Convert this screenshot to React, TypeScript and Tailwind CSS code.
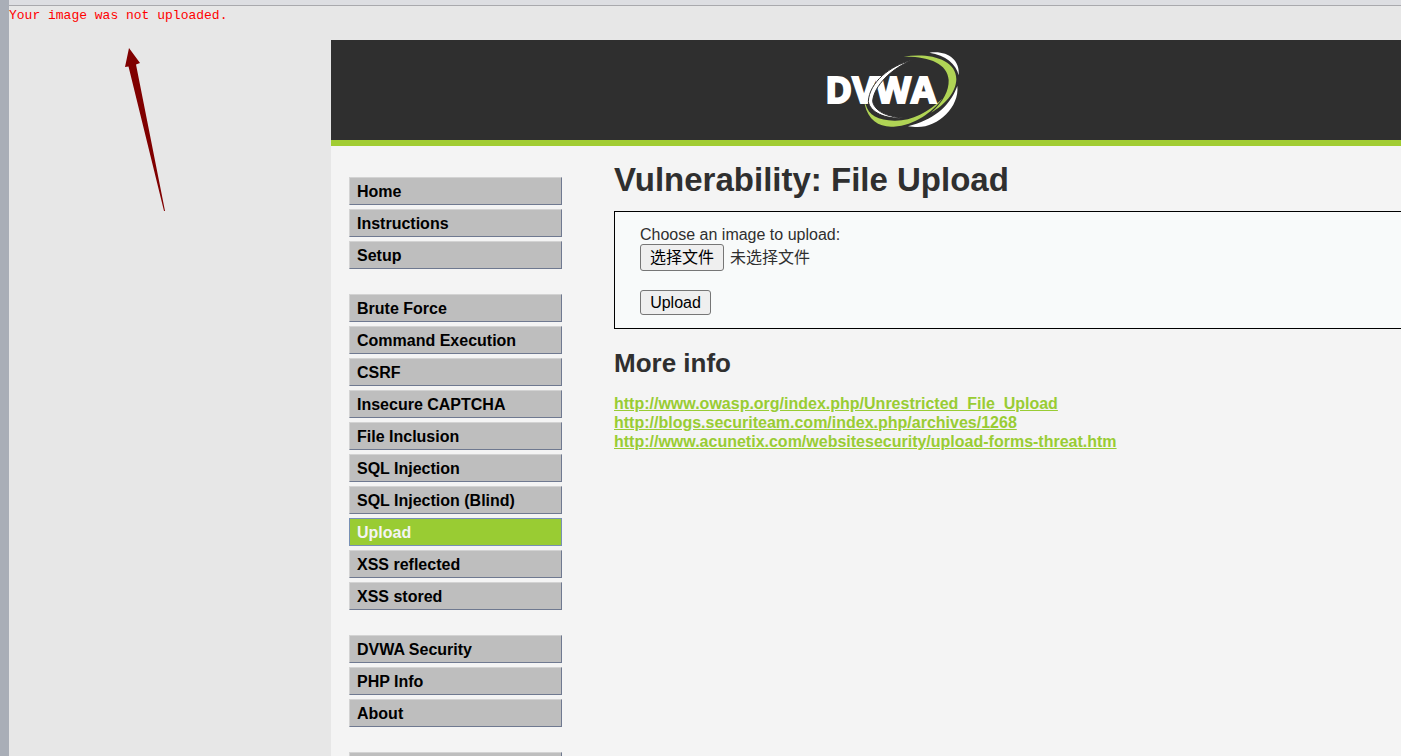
import React, { useRef } from "react";
import clsx from "clsx";

const menu = [
  ["Home", "Instructions", "Setup"],
  [
    "Brute Force",
    "Command Execution",
    "CSRF",
    "Insecure CAPTCHA",
    "File Inclusion",
    "SQL Injection",
    "SQL Injection (Blind)",
    "Upload",
    "XSS reflected",
    "XSS stored",
  ],
  ["DVWA Security", "PHP Info", "About"],
];

const links = [
  "http://www.owasp.org/index.php/Unrestricted_File_Upload",
  "http://blogs.securiteam.com/index.php/archives/1268",
  "http://www.acunetix.com/websitesecurity/upload-forms-threat.htm",
];

function Logo() {
  return (
    <svg
      viewBox="36 36 396 228"
      className="h-[76px] w-[132px] overflow-visible"
      role="img"
      aria-label="DVWA"
    >
      {/* lower sweep */}
      <path
        d="M149 193C160 243 195 263 236 260C300 256 352 216 382 176C340 216 290 243 238 242C190 242 160 226 152 193Z"
        fill="#b0d455"
      />
      <path d="M427 138C434 202 366 266 300 261L279 259C350 240 402 205 427 138Z" fill="#fff" />
      {/* upper sweep */}
      <path
        d="M266 50C340 38 424 56 424 118C423 158 388 196 348 218C386 184 402 152 401 120C398 70 340 48 266 50Z"
        fill="#b0d455"
      />
      <path d="M343 38C395 30 436 58 431 106C424 72 392 46 343 38Z" fill="#fff" />
      <text
        x="31"
        y="189"
        className="font-['Open_Sans',sans-serif] text-[109px] font-bold"
        fill="#fff"
        stroke="#fff"
        strokeWidth="6"
      >
        DVWA
      </text>
      <path
        d="M290 61C225 76 163 128 160 184C164 216 210 238 264 234C215 230 178 213 173 184C176 138 230 85 290 61Z"
        fill="#fff"
        stroke="#2f2f2f"
        strokeWidth="3"
      />
    </svg>
  );
}

function Sidebar() {
  return (
    <nav className="flex w-[213px] shrink-0 flex-col gap-[25px]">
      {menu.map((group) => (
        <ul key={group[0]} className="flex flex-col gap-1">
          {group.map((item) => (
            <li key={item}>
              <a
                href="#"
                className={clsx(
                  "flex h-7 items-center border px-[7px] font-bold",
                  item === "Upload"
                    ? "border-[#7890b4] bg-[#99cc33] text-[#f4f4f4]"
                    : "border-t-[#d3d3d3] border-r-[#6f7990] border-b-[#6f7990] border-l-[#d3d3d3] bg-[#bebebe] text-black"
                )}
              >
                {item}
              </a>
            </li>
          ))}
        </ul>
      ))}
      <a
        href="#"
        aria-label="Logout"
        className="h-7 border border-t-[#d3d3d3] border-r-[#6f7990] border-b-[#6f7990] border-l-[#d3d3d3] bg-[#bebebe]"
      />
    </nav>
  );
}

function UploadForm() {
  const fileRef = useRef<HTMLInputElement>(null);

  return (
    <form
      onSubmit={(e) => e.preventDefault()}
      className="flex flex-col items-start border border-black bg-[#f8fafa] px-[25px] py-[13px]"
    >
      <label htmlFor="uploaded">Choose an image to upload:</label>
      <div className="mb-[19px] flex items-center gap-[6px]">
        <input ref={fileRef} id="uploaded" type="file" accept="image/*" className="hidden" />
        <button
          type="button"
          onClick={() => fileRef.current?.click()}
          className="h-[27px] w-[84px] rounded-[3px] border border-[#767676] bg-[#efefef] text-black"
        >
          选择文件
        </button>
        <span>未选择文件</span>
      </div>
      <button
        type="submit"
        className="h-[25px] w-[71px] rounded-[3px] border border-[#767676] bg-[#efefef] text-black"
      >
        Upload
      </button>
    </form>
  );
}

export default function App() {
  return (
    <div className="relative flex h-screen overflow-hidden bg-[#e7e7e7] font-['Liberation_Sans','Noto_Sans_CJK_SC',sans-serif] text-[16px] leading-[19px] text-[#2f2f2f]">
      <div className="w-[9px] shrink-0 bg-[#a9aeb7]" />
      <div className="flex min-w-0 flex-1 flex-col">
        <div className="h-[6px] shrink-0 border-b border-[#a9a9ad] bg-[#dddee2]" />
        <pre className="h-[34px] shrink-0 font-['Liberation_Mono',monospace] text-[13px] text-[#ff0000]">
          Your image was not uploaded.
        </pre>

        {/* page body runs past the right edge */}
        <div className="-mr-[54px] ml-[322px] flex flex-1 flex-col bg-[#f4f4f4]">
          <header className="flex h-[106px] shrink-0 justify-center border-b-[6px] border-[#a1cc33] bg-[#2f2f2f] pt-3">
            <Logo />
          </header>
          <div className="flex gap-[52px] pl-[18px]">
            <div className="pt-[31px]">
              <Sidebar />
            </div>
            <main className="flex-1 pt-[14px]">
              <h1 className="mb-[11px] text-[33px] leading-[40px] font-bold">
                Vulnerability: File Upload
              </h1>
              <UploadForm />
              <h2 className="mt-[19px] mb-4 text-[26px] leading-[30px] font-bold">More info</h2>
              <ul>
                {links.map((url) => (
                  <li key={url}>
                    <a href={url} className="font-bold text-[#99cc33] underline">
                      {url}
                    </a>
                  </li>
                ))}
              </ul>
            </main>
          </div>
        </div>
      </div>

      {/* arrow pointing at the message */}
      <svg
        viewBox="0 0 42 166"
        className="absolute top-[47px] left-[124px] h-[166px] w-[42px]"
        aria-hidden="true"
      >
        <path d="M5 1L1 20L4.500 19.500L40 164L41 164L12 17.500L16 16Z" fill="#800000" />
      </svg>
    </div>
  );
}
